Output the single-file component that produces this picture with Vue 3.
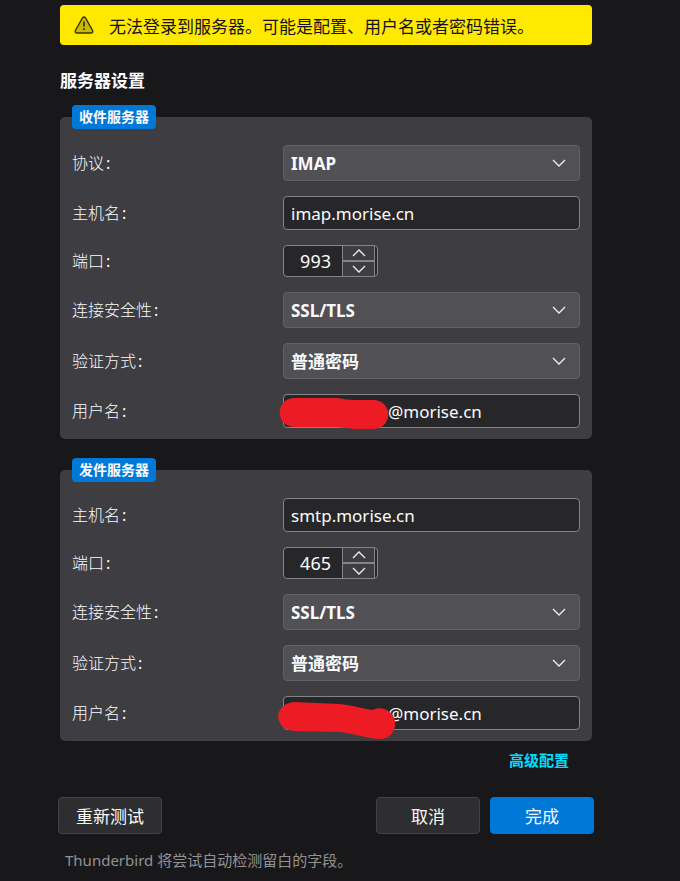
<template>
	<form class="setup" @submit.prevent>
		<div class="alert" role="alert">
			<svg class="alert-icon" viewBox="0 0 20 18" aria-hidden="true">
				<path class="triangle" d="M8.5 1.9 Q10 0 11.5 1.9 L18.6 14.4 Q19.3 17 17 17 H3 Q0.7 17 1.4 14.4 Z" />
				<path class="mark" d="M10 5.5 V10.5 M10 12.3 V14" />
			</svg>
			<span>无法登录到服务器。可能是配置、用户名或者密码错误。</span>
		</div>

		<h1>服务器设置</h1>

		<fieldset v-for="server in servers" :key="server.id">
			<legend>{{ server.title }}</legend>
			<div class="rows">
				<div v-for="field in server.fields" :key="field.name" class="row">
					<label :for="server.id + field.name">{{ field.label }}<span class="colon">:</span></label>

					<div v-if="field.type === 'select'" class="select">
						<select :id="server.id + field.name" v-model="field.value">
							<option v-for="option in field.options" :key="option">{{ option }}</option>
						</select>
						<svg class="chevron" viewBox="0 0 14 8" aria-hidden="true"><path d="M1 1 L7 7 L13 1" /></svg>
					</div>

					<div v-else-if="field.type === 'number'" class="number">
						<input :id="server.id + field.name" v-model.number="field.value" type="number">
						<div class="spin">
							<button type="button" aria-label="+" @click="field.value++">
								<svg viewBox="0 0 14 8" aria-hidden="true"><path d="M1 7 L7 1 L13 7" /></svg>
							</button>
							<button type="button" aria-label="-" @click="field.value--">
								<svg viewBox="0 0 14 8" aria-hidden="true"><path d="M1 1 L7 7 L13 1" /></svg>
							</button>
						</div>
					</div>

					<div v-else class="text">
						<input :id="server.id + field.name" v-model="field.value" type="text" :class="{ masked: field.mask }">
						<svg v-if="field.mask" class="mask" viewBox="0 0 120 46" aria-hidden="true">
							<path :d="field.mask" />
						</svg>
					</div>
				</div>
			</div>
		</fieldset>

		<div class="advanced"><a href="#">高级配置</a></div>

		<div class="actions">
			<button type="button" class="retest">重新测试</button>
			<button type="button">取消</button>
			<button type="submit" class="primary">完成</button>
		</div>

		<p class="note">Thunderbird 将尝试自动检测留白的字段。</p>
	</form>
</template>


<script setup>
import { ref } from 'vue';

const security = ['SSL/TLS', 'STARTTLS'];
const auth = ['普通密码', '加密密码', 'OAuth2'];

const servers = ref([
	{
		id: 'incoming',
		title: '收件服务器',
		fields: [
			{ name: 'protocol', label: '协议', type: 'select', value: 'IMAP', options: ['IMAP', 'POP3'] },
			{ name: 'host', label: '主机名', type: 'text', value: 'imap.morise.cn' },
			{ name: 'port', label: '端口', type: 'number', value: 993 },
			{ name: 'security', label: '连接安全性', type: 'select', value: 'SSL/TLS', options: security },
			{ name: 'auth', label: '验证方式', type: 'select', value: '普通密码', options: auth },
			{
				name: 'user',
				label: '用户名',
				type: 'text',
				value: '@morise.cn',
				mask: 'M17 6 L61 6 Q69 8 78 8 H97 C116 9 116 36 97 37 H78 Q70 36 59 35 H17 C-2 34 -2 7 17 6 Z'
			}
		]
	},
	{
		id: 'outgoing',
		title: '发件服务器',
		fields: [
			{ name: 'host', label: '主机名', type: 'text', value: 'smtp.morise.cn' },
			{ name: 'port', label: '端口', type: 'number', value: 465 },
			{ name: 'security', label: '连接安全性', type: 'select', value: 'SSL/TLS', options: security },
			{ name: 'auth', label: '验证方式', type: 'select', value: '普通密码', options: auth },
			{
				name: 'user',
				label: '用户名',
				type: 'text',
				value: '@morise.cn',
				mask: 'M17 8 L62 10 C75 11 86 15 96 16 C104 11 118 18 118 28 C119 40 110 46 100 45 C86 43 75 39 62 38 L17 37 C-4 35 -4 10 17 8 Z'
			}
		]
	}
]);
</script>

<style>
body {
	margin: 0;
	background-color: #18181b;
}
</style>

<style scoped>
.setup {
	padding: 5px 88px 10px 60px;
	font-family: "Noto Sans", "Noto Sans CJK SC", sans-serif;
	font-size: 17px;
	color: #fbfbfe;
}

.setup input,
.setup select,
.setup button {
	box-sizing: border-box;
	margin: 0;
	font: inherit;
	color: inherit;
	outline: none;
}

.alert {
	display: flex;
	align-items: center;
	gap: 15px;
	height: 40px;
	padding: 0 14px;
	border-radius: 4px;
	background-color: #ffe900;
	color: #15141a;
}

.alert-icon {
	width: 20px;
	height: 18px;
}

.triangle {
	fill: #ccba00;
	stroke: #38350a;
	stroke-width: 1.4;
}

.mark {
	fill: none;
	stroke: #27250a;
	stroke-width: 1.6;
}

h1 {
	margin: 24px 0 12px;
	font-size: 17px;
	line-height: 24px;
	font-weight: bold;
}

fieldset {
	min-width: 0;
	margin: 0 0 19px;
	padding: 16px 12px 11px;
	border: 0;
	border-radius: 5px;
	background-color: #3e3d42;
}

legend {
	padding: 0 7px;
	border-radius: 4px;
	background-color: #0078d7;
	font-size: 14px;
	line-height: 24px;
	font-weight: bold;
}

.rows {
	display: flex;
	flex-direction: column;
	gap: 15px;
}

.row {
	display: grid;
	grid-template-columns: 211px 1fr;
	align-items: center;
}

label {
	font-size: 16px;
	line-height: 24px;
	font-weight: 300;
}

.colon {
	margin-left: 2px;
	font-weight: normal;
}

.select {
	display: grid;
	grid-template-columns: 1fr 28px;
	align-items: center;
}

.select select {
	grid-area: 1 / 1 / 2 / 3;
	width: 100%;
	height: 36px;
	padding: 0 7px;
	appearance: none;
	border: 1px solid #626166;
	border-radius: 4px;
	background-color: #515055;
	font-weight: bold;
}

.select option {
	background-color: #3e3d42;
}

.chevron {
	grid-area: 1 / 2;
	pointer-events: none;
}

svg.chevron,
.spin svg {
	width: 14px;
	height: 8px;
	fill: none;
	stroke: #f0f0f4;
	stroke-width: 1.3;
}

.text {
	position: relative;
}

.text input {
	display: block;
	width: 100%;
	height: 34px;
	padding: 0 7px;
	border: 1px solid #858489;
	border-radius: 4px;
	background-color: #272729;
}

.text input.masked {
	padding-left: 104px;
}

/* red marker stroke over the private part of the address */
.mask {
	position: absolute;
	left: -6px;
	top: -2px;
	width: 120px;
	height: 46px;
	overflow: visible;
	pointer-events: none;
	fill: #ed1c24;
}

.number {
	display: flex;
	box-sizing: border-box;
	width: 95px;
	height: 32px;
	padding-right: 2px;
	border: 1px solid #858489;
	border-radius: 4px;
	background-color: #272729;
}

.number input {
	flex: 1;
	min-width: 0;
	padding: 0 11px 0 0;
	appearance: textfield;
	border: 0;
	background: none;
	font-size: 18px;
	text-align: right;
}

.number input::-webkit-inner-spin-button {
	display: none;
}

.spin {
	display: flex;
	flex-direction: column;
	gap: 2px;
	width: 31px;
	border: solid #858489;
	border-width: 0 1px;
	background-color: #858489;
}

.spin button {
	display: flex;
	flex: 1;
	align-items: center;
	justify-content: center;
	padding: 0;
	border: 0;
	background-color: #3e3e40;
}

.advanced {
	margin-top: -12px;
	padding-right: 23px;
	font-size: 15px;
	line-height: 24px;
	font-weight: bold;
	text-align: right;
}

.advanced a {
	color: #00ddff;
	text-decoration: none;
}

.actions {
	display: flex;
	gap: 10px;
	margin: 25px -2px 15px;
}

.actions button {
	width: 104px;
	height: 37px;
	padding: 0;
	border: 1px solid #434346;
	border-radius: 4px;
	background-color: #2e2e30;
}

.actions .retest {
	margin-right: auto;
}

.actions .primary {
	border-color: #0078d7;
	background-color: #0078d7;
}

.note {
	margin: 0;
	padding-left: 5px;
	font-size: 15px;
	line-height: 22px;
	color: #929295;
}
</style>
